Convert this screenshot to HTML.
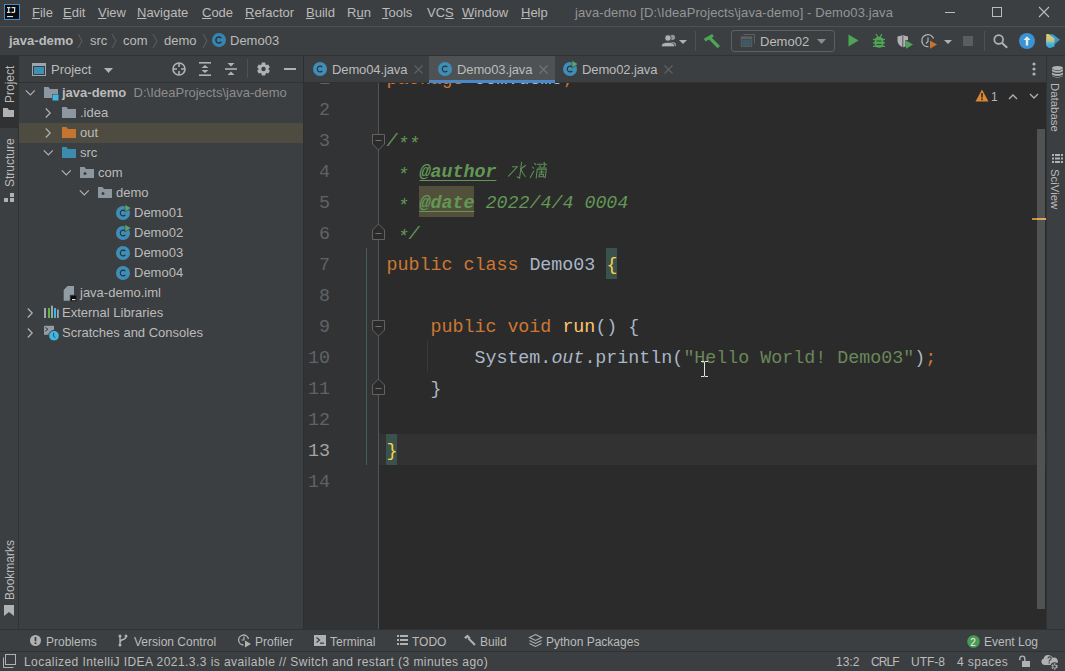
<!DOCTYPE html>
<html><head><meta charset="utf-8">
<style>
*{margin:0;padding:0;box-sizing:border-box}
html,body{width:1065px;height:671px;overflow:hidden;background:#3C3F41;font-family:"Liberation Sans",sans-serif;font-size:13px;color:#BBBBBB}
.a{position:absolute}
.t{position:absolute;white-space:pre;line-height:16px}
.u{text-decoration:underline;text-underline-offset:1px}
svg{position:absolute;overflow:visible}
.mono{font-family:"Liberation Mono",monospace}
</style></head><body>
<!-- ===== Title / menu bar ===== -->
<div class="a" style="left:0;top:0;width:1065px;height:26px;background:#3C3F41"></div>
<div class="a" style="left:0;top:26px;width:1065px;height:1px;background:#4F5152"></div>
<svg style="left:4px;top:4px" width="16" height="16" viewBox="0 0 16 16"><rect x="0.5" y="0.5" width="15" height="15" fill="#0C0C0C" stroke="#3D8FD9"/><g fill="#D8E2D8"><rect x="3" y="3" width="3.4" height="1.2"/><rect x="4.1" y="3" width="1.2" height="5.8"/><rect x="3" y="7.8" width="3.4" height="1.2"/><rect x="7.6" y="3" width="3.6" height="1.2"/><rect x="10" y="3" width="1.2" height="5"/><path d="M11.2 7.8Q11.2 9 9.6 9H7.5V7.8H9.6Q10 7.8 10 7.4Z"/><rect x="3" y="12" width="6" height="1.1"/></g></svg>
<div id="menu">
<span class="t" style="left:32px;top:5px"><span class="u">F</span>ile</span>
<span class="t" style="left:63px;top:5px"><span class="u">E</span>dit</span>
<span class="t" style="left:98px;top:5px"><span class="u">V</span>iew</span>
<span class="t" style="left:137px;top:5px"><span class="u">N</span>avigate</span>
<span class="t" style="left:202px;top:5px"><span class="u">C</span>ode</span>
<span class="t" style="left:245px;top:5px"><span class="u">R</span>efactor</span>
<span class="t" style="left:306px;top:5px"><span class="u">B</span>uild</span>
<span class="t" style="left:347px;top:5px">R<span class="u">u</span>n</span>
<span class="t" style="left:382px;top:5px"><span class="u">T</span>ools</span>
<span class="t" style="left:427px;top:5px">VC<span class="u">S</span></span>
<span class="t" style="left:462px;top:5px"><span class="u">W</span>indow</span>
<span class="t" style="left:521px;top:5px"><span class="u">H</span>elp</span>
</div>
<span class="t" style="left:575px;top:5px;color:#939597;letter-spacing:0.1px">java-demo [D:\IdeaProjects\java-demo] - Demo03.java</span>
<svg style="left:945px;top:12px" width="10" height="1"><rect width="10" height="1" fill="#BBBBBB"/></svg>
<svg style="left:992px;top:7px" width="10" height="10"><rect x="0.5" y="0.5" width="9" height="9" fill="none" stroke="#BBBBBB"/></svg>
<svg style="left:1039px;top:7px" width="10" height="10"><path d="M0 0L10 10M10 0L0 10" stroke="#BBBBBB" stroke-width="1.1"/></svg>

<!-- ===== Nav bar ===== -->
<div class="a" style="left:0;top:55px;width:1065px;height:1px;background:#323232"></div>
<span class="t" style="left:9px;top:33px;font-weight:bold">java-demo</span>
<svg style="left:77px;top:33px" width="6" height="16"><path d="M1 1L5 8L1 15" fill="none" stroke="#5E6060"/></svg>
<span class="t" style="left:90px;top:33px">src</span>
<svg style="left:111px;top:33px" width="6" height="16"><path d="M1 1L5 8L1 15" fill="none" stroke="#5E6060"/></svg>
<span class="t" style="left:123px;top:33px">com</span>
<svg style="left:152px;top:33px" width="6" height="16"><path d="M1 1L5 8L1 15" fill="none" stroke="#5E6060"/></svg>
<span class="t" style="left:164px;top:33px">demo</span>
<svg style="left:202px;top:33px" width="6" height="16"><path d="M1 1L5 8L1 15" fill="none" stroke="#5E6060"/></svg>
<svg style="left:212px;top:33px" width="14" height="14" viewBox="0 0 14 14"><circle cx="7" cy="7" r="7" fill="#3592C4" opacity=".85"/><path d="M9.3 5.2A3 3 0 1 0 9.3 8.8" fill="none" stroke="#27323A" stroke-width="1.5"/></svg>
<span class="t" style="left:230px;top:33px">Demo03</span>


<!-- ===== Left stripe ===== -->
<div class="a" style="left:0;top:56px;width:18px;height:573px;background:#3C3F41"></div>
<div class="a" style="left:0;top:56px;width:18px;height:72px;background:#2F3133"></div>
<div class="a" style="left:18px;top:56px;width:1px;height:573px;background:#323232"></div>
<span class="t" style="left:2px;top:103px;transform-origin:0 0;transform:rotate(-90deg);font-size:12px">Project</span>
<svg style="left:3px;top:108px" width="11" height="9"><path d="M0 0H4.5L6 2H11V9H0Z" fill="#AFB1B3"/></svg>
<span class="t" style="left:2px;top:187px;transform-origin:0 0;transform:rotate(-90deg);font-size:12px">Structure</span>
<svg style="left:4px;top:193px" width="10" height="9"><rect x="6" y="0" width="4" height="4" fill="#AFB1B3"/><rect x="0" y="5" width="4" height="4" fill="#AFB1B3"/><rect x="6" y="5" width="4" height="4" fill="#AFB1B3"/></svg>
<span class="t" style="left:2px;top:600px;transform-origin:0 0;transform:rotate(-90deg);font-size:12px">Bookmarks</span>
<svg style="left:4px;top:605px" width="10" height="11"><path d="M0 0H10V11L5 7L0 11Z" fill="#AFB1B3"/></svg>

<!-- ===== Project panel ===== -->
<div class="a" style="left:19px;top:56px;width:284px;height:573px;background:#3C3F41"></div>
<div class="a" style="left:19px;top:82px;width:284px;height:1px;background:#323232"></div>
<div class="a" style="left:303px;top:56px;width:1px;height:573px;background:#2E2F30"></div>
<svg style="left:32px;top:63px" width="14" height="13"><rect x="0.5" y="0.5" width="13" height="12" fill="none" stroke="#9AA7B0"/><rect x="0" y="0" width="14" height="3" fill="#9AA7B0"/><rect x="2" y="4" width="10" height="7" fill="#3D8FB6"/></svg>
<span class="t" style="left:51px;top:62px">Project</span>
<svg style="left:104px;top:68px" width="9" height="5"><path d="M0 0H9L4.5 5Z" fill="#AFB1B3"/></svg>
<svg style="left:172px;top:62px" width="14" height="14" viewBox="0 0 14 14"><circle cx="7" cy="7" r="6" fill="none" stroke="#AFB1B3" stroke-width="1.6"/><path d="M7 1V5M7 9V13M1 7H5M9 7H13" stroke="#AFB1B3" stroke-width="1.6"/></svg>
<svg style="left:199px;top:62px" width="12" height="14"><rect x="0" y="0" width="12" height="1.6" fill="#AFB1B3"/><rect x="0" y="12.4" width="12" height="1.6" fill="#AFB1B3"/><path d="M6 3L9.5 6H2.5Z M6 11L2.5 8H9.5Z" fill="#AFB1B3"/></svg>
<svg style="left:225px;top:63px" width="12" height="12"><rect x="0" y="5.2" width="12" height="1.6" fill="#AFB1B3"/><path d="M2.5 0H9.5L6 3.5Z M2.5 12H9.5L6 8.5Z" fill="#AFB1B3"/></svg>
<div class="a" style="left:247px;top:59px;width:1px;height:19px;background:#515151"></div>
<svg style="left:257px;top:62px" width="13" height="14" viewBox="0 0 13 14"><path d="M4.35 2.60L4.90 0.60L8.10 0.60L8.65 2.60L9.24 2.94L11.25 2.42L12.84 5.18L11.39 6.66L11.39 7.34L12.84 8.82L11.25 11.58L9.24 11.06L8.65 11.40L8.10 13.40L4.90 13.40L4.35 11.40L3.76 11.06L1.75 11.58L0.16 8.82L1.61 7.34L1.61 6.66L0.16 5.18L1.75 2.42L3.76 2.94Z" fill="#AFB1B3"/><circle cx="6.5" cy="7" r="2.2" fill="#3C3F41"/></svg>
<div class="a" style="left:284px;top:68px;width:12px;height:2px;background:#AFB1B3"></div>

<!-- tree -->
<div class="a" style="left:19px;top:123px;width:284px;height:20px;background:#4E4C40"></div>


<svg width="0" height="0" style="position:absolute">
<defs>
<symbol id="chd" viewBox="0 0 16 20"><path d="M3.8 7.3L8.3 11.8L12.8 7.3" fill="none" stroke="#AFB1B3" stroke-width="1.2"/></symbol>
<symbol id="chr" viewBox="0 0 16 20"><path d="M5.8 5.5L10.2 10L5.8 14.5" fill="none" stroke="#AFB1B3" stroke-width="1.2"/></symbol>
<symbol id="fold" viewBox="0 0 16 20"><path d="M1 4H5.5L7 6H15V15H1Z" fill="#9AA7B0" fill-opacity=".85"/></symbol>
<symbol id="foldO" viewBox="0 0 16 20"><path d="M1 4H5.5L7 6H15V15H1Z" fill="#C57431"/></symbol>
<symbol id="foldS" viewBox="0 0 16 20"><path d="M1 4H5.5L7 6H15V15H1Z" fill="#3D8BAF"/></symbol>
<symbol id="foldP" viewBox="0 0 16 20"><path d="M1 4H5.5L7 6H15V15H1Z" fill="#9AA7B0" fill-opacity=".85"/><circle cx="6" cy="10.5" r="1.5" fill="#3C3F41"/></symbol>
<symbol id="foldM" viewBox="0 0 16 20"><path d="M1 4H5.5L7 6H15V11H9V15H1Z" fill="#9AA7B0" fill-opacity=".85"/><rect x="9.5" y="11.5" width="6" height="6" fill="#40B6E0"/></symbol>
<symbol id="cls" viewBox="0 0 16 20"><circle cx="8" cy="10" r="7" fill="#3E8EB8"/><path d="M10.3 8A2.9 2.9 0 1 0 10.3 12" fill="none" stroke="#26323A" stroke-width="1.15"/></symbol>
<symbol id="clsR" viewBox="0 0 16 20"><circle cx="8" cy="10" r="7" fill="#3E8EB8"/><path d="M10.3 8A2.9 2.9 0 1 0 10.3 12" fill="none" stroke="#26323A" stroke-width="1.15"/><path d="M10 1.5L16 5L10 9Z" fill="#59A869" stroke="#3C3F41" stroke-width=".6"/></symbol>
<symbol id="iml" viewBox="0 0 16 20"><path d="M2.7 7L6.5 3H13V17.8H2.7Z" fill="#9AA7B0" fill-opacity=".9"/><rect x="9.2" y="12.2" width="6.6" height="6.4" fill="#0E0E0E" stroke="#3C3F41" stroke-width=".8"/><rect x="11" y="16" width="3.5" height="1.2" fill="#E0E6E0"/></symbol>
<symbol id="lib" viewBox="0 0 16 20"><rect x="1" y="5" width="2" height="10" fill="#9AA7B0"/><rect x="5" y="5" width="2" height="10" fill="#62B543"/><rect x="8" y="2.7" width="2" height="12.3" fill="#9AA7B0"/><rect x="11" y="5" width="2" height="10" fill="#40B6E0"/><rect x="14" y="6.5" width="1.8" height="8.5" fill="#9AA7B0"/></symbol>
<symbol id="scr" viewBox="0 0 16 20"><path d="M1 2.8H11V11.8H1Z" fill="#9AA7B0" fill-opacity=".9"/><path d="M2.3 4.5L5 6.3L2.3 8.1" fill="none" stroke="#3C3F41" stroke-width="1"/><circle cx="11" cy="12.7" r="5.3" fill="#40B6E0" stroke="#3C3F41" stroke-width="1"/><path d="M10.6 9.8V13.3L12.4 14.6" fill="none" stroke="#2B5060" stroke-width="1"/></symbol>
</defs></svg>
<svg style="left:22px;top:83px" width="16" height="20"><use href="#chd"/></svg>
<svg style="left:43px;top:83px" width="16" height="20"><use href="#foldM"/></svg>
<span class="t" style="left:62px;top:85px"><b>java-demo</b>  <span style="color:#8C8C8C">D:\IdeaProjects\java-demo</span></span>
<svg style="left:40px;top:103px" width="16" height="20"><use href="#chr"/></svg>
<svg style="left:61px;top:103px" width="16" height="20"><use href="#fold"/></svg>
<span class="t" style="left:80px;top:105px">.idea</span>
<svg style="left:40px;top:123px" width="16" height="20"><use href="#chr"/></svg>
<svg style="left:61px;top:123px" width="16" height="20"><use href="#foldO"/></svg>
<span class="t" style="left:80px;top:125px">out</span>
<svg style="left:40px;top:143px" width="16" height="20"><use href="#chd"/></svg>
<svg style="left:61px;top:143px" width="16" height="20"><use href="#foldS"/></svg>
<span class="t" style="left:80px;top:145px">src</span>
<svg style="left:58px;top:163px" width="16" height="20"><use href="#chd"/></svg>
<svg style="left:79px;top:163px" width="16" height="20"><use href="#foldP"/></svg>
<span class="t" style="left:98px;top:165px">com</span>
<svg style="left:76px;top:183px" width="16" height="20"><use href="#chd"/></svg>
<svg style="left:97px;top:183px" width="16" height="20"><use href="#foldP"/></svg>
<span class="t" style="left:116px;top:185px">demo</span>
<svg style="left:115px;top:203px" width="16" height="20"><use href="#clsR"/></svg>
<span class="t" style="left:134px;top:205px">Demo01</span>
<svg style="left:115px;top:223px" width="16" height="20"><use href="#clsR"/></svg>
<span class="t" style="left:134px;top:225px">Demo02</span>
<svg style="left:115px;top:243px" width="16" height="20"><use href="#cls"/></svg>
<span class="t" style="left:134px;top:245px">Demo03</span>
<svg style="left:115px;top:263px" width="16" height="20"><use href="#cls"/></svg>
<span class="t" style="left:134px;top:265px">Demo04</span>
<svg style="left:61px;top:283px" width="16" height="20"><use href="#iml"/></svg>
<span class="t" style="left:80px;top:285px">java-demo.iml</span>
<svg style="left:22px;top:303px" width="16" height="20"><use href="#chr"/></svg>
<svg style="left:43px;top:303px" width="16" height="20"><use href="#lib"/></svg>
<span class="t" style="left:62px;top:305px">External Libraries</span>
<svg style="left:22px;top:323px" width="16" height="20"><use href="#chr"/></svg>
<svg style="left:43px;top:323px" width="16" height="20"><use href="#scr"/></svg>
<span class="t" style="left:62px;top:325px">Scratches and Consoles</span>


<!-- ===== Editor ===== -->
<div class="a" style="left:304px;top:56px;width:742px;height:26px;background:#3C3F41"></div>
<div class="a" style="left:429px;top:56px;width:126px;height:26px;background:#4E5254"></div>
<div class="a" style="left:304px;top:82px;width:742px;height:1px;background:#323232"></div>
<div class="a" style="left:304px;top:83px;width:742px;height:546px;background:#2B2B2B"></div>
<div class="a" style="left:304px;top:83px;width:74px;height:546px;background:#313335"></div>
<div class="a" style="left:379px;top:434px;width:667px;height:31px;background:#323232"></div>
<div class="a" style="left:419px;top:186px;width:55px;height:31px;background:#52503A"></div>
<div class="a" style="left:606px;top:248px;width:11px;height:31px;background:#3B514D"></div>
<div class="a" style="left:386px;top:434px;width:11px;height:31px;background:#3B514D"></div>
<div class="a" style="left:378px;top:83px;width:1px;height:546px;background:#555555"></div>
<div class="a" style="left:366px;top:248px;width:1px;height:217px;background:#4A5C5E"></div>
<div class="a" style="left:427px;top:341px;width:1px;height:31px;background:#393B3B"></div>

<svg style="left:312px;top:59px" width="16" height="20"><use href="#cls"/></svg>
<span class="t" style="left:332px;top:62px;letter-spacing:-0.12px">Demo04.java</span>
<svg style="left:414px;top:65px" width="9" height="9"><path d="M0.5 0.5L8.5 8.5M8.5 0.5L0.5 8.5" stroke="#5F6163" stroke-width="1.1"/></svg>
<svg style="left:437px;top:59px" width="16" height="20"><use href="#cls"/></svg>
<span class="t" style="left:457px;top:62px;letter-spacing:-0.12px">Demo03.java</span>
<svg style="left:539px;top:65px" width="9" height="9"><path d="M0.5 0.5L8.5 8.5M8.5 0.5L0.5 8.5" stroke="#727476" stroke-width="1.1"/></svg>
<svg style="left:562px;top:59px" width="16" height="20"><use href="#clsR"/></svg>
<span class="t" style="left:582px;top:62px;letter-spacing:-0.12px">Demo02.java</span>
<svg style="left:664px;top:65px" width="9" height="9"><path d="M0.5 0.5L8.5 8.5M8.5 0.5L0.5 8.5" stroke="#5F6163" stroke-width="1.1"/></svg>
<div class="a" style="left:429px;top:80px;width:126px;height:3px;background:#4A88C7"></div>
<svg style="left:1032px;top:62px" width="4" height="14"><circle cx="2" cy="2" r="1.6" fill="#AFB1B3"/><circle cx="2" cy="7" r="1.6" fill="#AFB1B3"/><circle cx="2" cy="12" r="1.6" fill="#AFB1B3"/></svg>
<div class="a" style="left:304px;top:83px;width:742px;height:546px;overflow:hidden"><div class="a" id="code" style="left:0;top:2px;width:742px;height:546px">
<div class="t mono" style="left:0;width:26px;text-align:right;top:-21px;font-size:18.333px;line-height:31px;color:#606366">1</div>
<div class="t mono" style="left:82.4px;top:-21px;font-size:18.333px;line-height:31px"><span style="color:#CC7832;">package</span><span style="color:#A9B7C6;"> com.demo</span><span style="color:#CC7832;">;</span></div>
<div class="t mono" style="left:0;width:26px;text-align:right;top:10px;font-size:18.333px;line-height:31px;color:#606366">2</div>
<div class="t mono" style="left:0;width:26px;text-align:right;top:41px;font-size:18.333px;line-height:31px;color:#606366">3</div>
<div class="t mono" style="left:82.4px;top:41px;font-size:18.333px;line-height:31px"><span style="color:#629755;font-style:italic">/<span style="position:relative;top:3px">*</span><span style="position:relative;top:3px">*</span></span></div>
<div class="t mono" style="left:0;width:26px;text-align:right;top:72px;font-size:18.333px;line-height:31px;color:#606366">4</div>
<div class="t mono" style="left:82.4px;top:72px;font-size:18.333px;line-height:31px"><span style="color:#629755;font-style:italic"> <span style="position:relative;top:3px">*</span> </span><span style="color:#629755;font-style:italic;font-weight:bold;text-decoration:underline;text-underline-offset:3px;text-decoration-thickness:1px">@author</span><span style="color:#629755;font-style:italic"> </span></div>
<div class="t mono" style="left:0;width:26px;text-align:right;top:103px;font-size:18.333px;line-height:31px;color:#606366">5</div>
<div class="t mono" style="left:82.4px;top:103px;font-size:18.333px;line-height:31px"><span style="color:#629755;font-style:italic"> <span style="position:relative;top:3px">*</span> </span><span style="color:#629755;font-style:italic;font-weight:bold;text-decoration:underline;text-underline-offset:3px;text-decoration-thickness:1px">@date</span><span style="color:#629755;font-style:italic"> 2022/4/4 0004</span></div>
<div class="t mono" style="left:0;width:26px;text-align:right;top:134px;font-size:18.333px;line-height:31px;color:#606366">6</div>
<div class="t mono" style="left:82.4px;top:134px;font-size:18.333px;line-height:31px"><span style="color:#629755;font-style:italic"> <span style="position:relative;top:3px">*</span>/</span></div>
<div class="t mono" style="left:0;width:26px;text-align:right;top:165px;font-size:18.333px;line-height:31px;color:#606366">7</div>
<div class="t mono" style="left:82.4px;top:165px;font-size:18.333px;line-height:31px"><span style="color:#CC7832;">public class </span><span style="color:#A9B7C6;">Demo03 </span><span style="color:#F5D446;">{</span></div>
<div class="t mono" style="left:0;width:26px;text-align:right;top:196px;font-size:18.333px;line-height:31px;color:#606366">8</div>
<div class="t mono" style="left:0;width:26px;text-align:right;top:227px;font-size:18.333px;line-height:31px;color:#606366">9</div>
<div class="t mono" style="left:82.4px;top:227px;font-size:18.333px;line-height:31px"><span style="color:#CC7832;">    public void </span><span style="color:#FFC66D;">run</span><span style="color:#A9B7C6;">() {</span></div>
<div class="t mono" style="left:0;width:26px;text-align:right;top:258px;font-size:18.333px;line-height:31px;color:#606366">10</div>
<div class="t mono" style="left:82.4px;top:258px;font-size:18.333px;line-height:31px"><span style="color:#A9B7C6;">        System.</span><span style="color:#A9B7C6;font-style:italic">out</span><span style="color:#A9B7C6;">.println(</span><span style="color:#6A8759;">"Hello World! Demo03"</span><span style="color:#A9B7C6;">)</span><span style="color:#CC7832;">;</span></div>
<div class="t mono" style="left:0;width:26px;text-align:right;top:289px;font-size:18.333px;line-height:31px;color:#606366">11</div>
<div class="t mono" style="left:82.4px;top:289px;font-size:18.333px;line-height:31px"><span style="color:#A9B7C6;">    }</span></div>
<div class="t mono" style="left:0;width:26px;text-align:right;top:320px;font-size:18.333px;line-height:31px;color:#606366">12</div>
<div class="t mono" style="left:0;width:26px;text-align:right;top:351px;font-size:18.333px;line-height:31px;color:#A4A3A3">13</div>
<div class="t mono" style="left:82.4px;top:351px;font-size:18.333px;line-height:31px"><span style="color:#F5D446;">}</span></div>
<div class="t mono" style="left:0;width:26px;text-align:right;top:382px;font-size:18.333px;line-height:31px;color:#606366">14</div>
</div></div>
<svg style="left:372px;top:134px" width="13" height="17"><path d="M0.5 0.5H12.5V10L6.5 16L0.5 10Z" fill="#2B2B2B" stroke="#626262"/><path d="M3.5 6.5H9.5" stroke="#707070"/></svg>
<svg style="left:372px;top:320px" width="13" height="17"><path d="M0.5 0.5H12.5V10L6.5 16L0.5 10Z" fill="#2B2B2B" stroke="#626262"/><path d="M3.5 6.5H9.5" stroke="#707070"/></svg>
<svg style="left:372px;top:223px" width="13" height="17"><path d="M0.5 16.5H12.5V7L6.5 1L0.5 7Z" fill="#2B2B2B" stroke="#626262"/><path d="M3.5 10.5H9.5" stroke="#707070"/></svg>
<svg style="left:372px;top:378px" width="13" height="17"><path d="M0.5 16.5H12.5V7L6.5 1L0.5 7Z" fill="#2B2B2B" stroke="#626262"/><path d="M3.5 10.5H9.5" stroke="#707070"/></svg>
<svg style="left:700px;top:360px" width="9" height="18"><path d="M1 1.5H4M5 1.5H8M4.5 1.5V16.5M1 16.5H4M5 16.5H8" stroke="#DDE3DD" stroke-width="1"/></svg>
<svg style="left:975px;top:89px" width="14" height="13"><path d="M7 0.5L13.5 12.5H0.5Z" fill="#D98733"/><rect x="6.2" y="4" width="1.6" height="4.5" fill="#2B2B2B"/><rect x="6.2" y="9.5" width="1.6" height="1.6" fill="#2B2B2B"/></svg>
<span class="t" style="left:991px;top:89px;color:#A9B7C6;font-size:12px">1</span>
<svg style="left:1008px;top:93px" width="10" height="7"><path d="M1 6L5 2L9 6" fill="none" stroke="#AFB1B3" stroke-width="1.3"/></svg>
<svg style="left:1029px;top:93px" width="10" height="7"><path d="M1 1L5 5L9 1" fill="none" stroke="#AFB1B3" stroke-width="1.3"/></svg>
<div class="a" style="left:1037px;top:129px;width:8px;height:480px;background:#505254"></div>
<div class="a" style="left:1032px;top:218px;width:5px;height:2px;background:#D08A36"></div>
<div class="a" style="left:1037px;top:218px;width:9px;height:2px;background:#D9A860"></div>


<svg style="left:508px;top:162px" width="40" height="18" viewBox="0 0 40 18"><g fill="none" stroke="#5C9156" stroke-width="1.05" stroke-linecap="round">
<path d="M13.5 0.3Q12.8 8 11.6 16.2L9.2 14.8"/><path d="M4.3 4.8H9.3L0.6 14.2"/><path d="M17.5 3.5L12.9 6.8"/><path d="M12.9 6.8Q14.5 11.5 17.2 14.5"/>
<path d="M26.5 1.3L27.8 2.6"/><path d="M24.5 5L25.8 6.3"/><path d="M22.3 15.6L25.8 9"/>
<path d="M36 0.2L36.6 1.6"/><path d="M29.3 2.2H38.6"/><path d="M31.8 3.5L32.6 5"/><path d="M36.8 3.4L35.8 5"/><path d="M30 6H38"/>
<path d="M29.2 7.2L28.2 16.2"/><path d="M29.2 7.2H38.3L37.2 15.5L35.8 14.8"/><path d="M31 10H36.2"/><path d="M33.8 8L33.3 12"/><path d="M31.4 12.2H35.6L35.1 14.8H30.9Z"/>
</g></svg>

<!-- ===== Right stripe ===== -->
<div class="a" style="left:1046px;top:56px;width:1px;height:573px;background:#323232"></div>
<svg style="left:1052px;top:66px" width="11" height="12" viewBox="0 0 11 12"><ellipse cx="5.5" cy="2" rx="5.5" ry="2" fill="#AFB1B3"/><path d="M0 3.2Q5.5 6.5 11 3.2V5.2Q5.5 8.5 0 5.2Z M0 6.4Q5.5 9.7 11 6.4V8.4Q5.5 11.7 0 8.4Z M0 9.6Q5.5 12.9 11 9.6V10Q5.5 13.5 0 10Z" fill="#AFB1B3"/></svg>
<span class="t" style="left:1063px;top:83px;transform-origin:0 0;transform:rotate(90deg);font-size:11.4px">Database</span>
<svg style="left:1052px;top:154px" width="11" height="9"><rect x="0" y="0" width="2" height="2" fill="#AFB1B3"/><rect x="0" y="3.5" width="2" height="2" fill="#AFB1B3"/><rect x="0" y="7" width="2" height="2" fill="#AFB1B3"/><rect x="3" y="0" width="5" height="2" fill="#AFB1B3"/><rect x="3" y="3.5" width="5" height="2" fill="#AFB1B3"/><rect x="3" y="7" width="5" height="2" fill="#AFB1B3"/><rect x="9" y="0" width="2" height="2" fill="#AFB1B3"/><rect x="9" y="3.5" width="2" height="2" fill="#AFB1B3"/><rect x="9" y="7" width="2" height="2" fill="#AFB1B3"/></svg>
<span class="t" style="left:1063px;top:169px;transform-origin:0 0;transform:rotate(90deg);font-size:11.4px">SciView</span>

<!-- ===== Bottom tool stripe ===== -->
<div class="a" style="left:0;top:629px;width:1065px;height:1px;background:#323232"></div>
<div class="a" style="left:0;top:651px;width:1065px;height:1px;background:#323232"></div>
<div style="font-size:12px">
<svg style="left:30px;top:635px" width="11" height="11"><circle cx="5.5" cy="5.5" r="5.5" fill="#AFB1B3"/><rect x="4.6" y="2" width="1.8" height="4.2" fill="#3C3F41"/><rect x="4.6" y="7.3" width="1.8" height="1.8" fill="#3C3F41"/></svg>
<span class="t" style="left:46px;top:634px">Problems</span>
<svg style="left:118px;top:634px" width="10" height="13"><path d="M2 1.5V11.5M2 9Q2 6 5 5.5Q8 5 8 2" fill="none" stroke="#AFB1B3" stroke-width="1.4"/><circle cx="2" cy="2" r="1.5" fill="#AFB1B3"/><circle cx="8" cy="2" r="1.5" fill="#AFB1B3"/><circle cx="2" cy="11" r="1.5" fill="#AFB1B3"/></svg>
<span class="t" style="left:134px;top:634px">Version Control</span>
<svg style="left:238px;top:634px" width="14" height="14"><path d="M10.5 5A5 5 0 1 0 5.5 11" fill="none" stroke="#AFB1B3" stroke-width="1.3"/><path d="M6 2.5V6H3.5" fill="none" stroke="#AFB1B3" stroke-width="1.2"/><path d="M7 6.5L13 10L7 13.5Z" fill="#AFB1B3"/></svg>
<span class="t" style="left:255px;top:634px">Profiler</span>
<svg style="left:314px;top:635px" width="12" height="11"><rect x="0" y="0" width="12" height="11" fill="#AFB1B3"/><path d="M2.5 2.5L5.5 5L2.5 7.5" fill="none" stroke="#3C3F41" stroke-width="1.3"/><rect x="6" y="7.5" width="4" height="1.3" fill="#3C3F41"/></svg>
<span class="t" style="left:330px;top:634px">Terminal</span>
<svg style="left:397px;top:635px" width="11" height="10"><rect x="0" y="0" width="2" height="2" fill="#AFB1B3"/><rect x="0" y="4" width="2" height="2" fill="#AFB1B3"/><rect x="0" y="8" width="2" height="2" fill="#AFB1B3"/><rect x="3" y="0" width="8" height="2" fill="#AFB1B3"/><rect x="3" y="4" width="8" height="2" fill="#AFB1B3"/><rect x="3" y="8" width="8" height="2" fill="#AFB1B3"/></svg>
<span class="t" style="left:412px;top:634px">TODO</span>
<svg style="left:463px;top:634px" width="13" height="13"><path d="M1 3.5L4.5 0.5L7.5 3.5L6 5L4.5 3.5L3 5Z" fill="#AFB1B3"/><path d="M5.3 4.2L12 11" stroke="#AFB1B3" stroke-width="2"/></svg>
<span class="t" style="left:480px;top:634px">Build</span>
<svg style="left:529px;top:634px" width="13" height="13"><path d="M6.5 0.5L12.5 3.5L6.5 6.5L0.5 3.5Z" fill="none" stroke="#AFB1B3" stroke-width="1.1"/><path d="M0.5 6.5L6.5 9.5L12.5 6.5M0.5 9.5L6.5 12.5L12.5 9.5" fill="none" stroke="#AFB1B3" stroke-width="1.1"/></svg>
<span class="t" style="left:546px;top:634px">Python Packages</span>
<svg style="left:967px;top:635px" width="13" height="13"><circle cx="6.5" cy="6.5" r="6.3" fill="#499C54"/><text x="3.3" y="10.5" font-family="Liberation Sans" font-size="10" fill="#E8F0E8">2</text></svg>
<span class="t" style="left:984px;top:634px">Event Log</span>

<!-- ===== Status bar ===== -->
<svg style="left:3px;top:654px" width="13" height="14"><path d="M0.5 3.5V13.5H10.5" fill="none" stroke="#AFB1B3"/><rect x="2.5" y="0.5" width="10" height="10" fill="none" stroke="#AFB1B3"/></svg>
<span class="t" style="left:24px;top:654px;letter-spacing:0.44px">Localized IntelliJ IDEA 2021.3.3 is available // Switch and restart (3 minutes ago)</span>
<span class="t" style="left:836px;top:654px">13:2</span>
<span class="t" style="left:871px;top:654px;letter-spacing:-0.9px">CRLF</span>
<span class="t" style="left:911px;top:654px">UTF-8</span>
<span class="t" style="left:957px;top:654px;letter-spacing:0.4px">4 spaces</span>
<svg style="left:1018px;top:655px" width="13" height="13"><path d="M1.8 5.2V3.6A2.5 2.5 0 0 1 6.8 3.6V6" fill="none" stroke="#AFB1B3" stroke-width="1.4"/><rect x="4" y="6" width="8" height="6" fill="#AFB1B3"/></svg>
<svg style="left:1041px;top:654px" width="18" height="16" viewBox="0 0 18 16"><path d="M3.5 11A3.2 3.2 0 0 1 2.5 4.8A5 5 0 0 1 11.8 3.8A3.5 3.5 0 0 1 14.5 10.5L13 11Z" fill="#AFB1B3"/><path d="M7 4.5A1.6 1.6 0 1 1 9 6Q8.2 6.5 8.2 7.5" fill="none" stroke="#3C3F41" stroke-width="1.1"/><rect x="7.6" y="8.3" width="1.2" height="1.2" fill="#3C3F41"/><circle cx="13.5" cy="12.5" r="4.2" fill="#3C3F41"/><circle cx="13.5" cy="12.5" r="2.4" fill="none" stroke="#AFB1B3" stroke-width="1.5" stroke-dasharray="1.4 1"/><circle cx="13.5" cy="12.5" r="1.6" fill="none" stroke="#AFB1B3" stroke-width=".8"/></svg>
</div>


<!-- ===== Toolbar ===== -->
<svg style="left:661px;top:34px" width="16" height="14" viewBox="0 0 16 14"><circle cx="11.5" cy="3.3" r="2.6" fill="#AFB1B3" fill-opacity=".75"/><path d="M8.5 8.5Q11.5 6.5 15 9.5V12H10Z" fill="#AFB1B3" fill-opacity=".75"/><circle cx="7" cy="4" r="3.2" fill="#AFB1B3" stroke="#3C3F41" stroke-width=".8"/><path d="M0.5 12.8V11Q1.5 8.5 7 8.3Q12.5 8.5 13.5 11V12.8Z" fill="#AFB1B3" stroke="#3C3F41" stroke-width=".8"/></svg>
<svg style="left:679px;top:40px" width="8" height="4"><path d="M0 0H8L4 4Z" fill="#AFB1B3"/></svg>
<div class="a" style="left:695px;top:31px;width:1px;height:20px;background:#515151"></div>
<svg style="left:703px;top:33px" width="17" height="16" viewBox="0 0 17 16"><path d="M0.8 5.8L9.2 0.9L10.8 3.4L2.5 8.4Z" fill="#4FA556"/><path d="M6 4.2L15.8 14.2" stroke="#4FA556" stroke-width="3.2"/></svg>
<div class="a" style="left:731px;top:30px;width:104px;height:22px;border:1px solid #5E6060;border-radius:3px"></div>
<svg style="left:740px;top:34px" width="16" height="14" viewBox="0 0 16 14"><path d="M3.5 0.5H14.5V9.5" fill="none" stroke="#5E6060"/><rect x="1.3" y="3.1" width="10.4" height="9.3" fill="#3C3F41" stroke="#5E6060"/><rect x="1" y="2.6" width="11" height="2.4" fill="#5E6060"/><rect x="2.3" y="5.5" width="8.4" height="6.4" fill="#3D5A66"/></svg>
<span class="t" style="left:760px;top:34px">Demo02</span>
<svg style="left:817px;top:39px" width="9" height="5"><path d="M0 0H9L4.5 5Z" fill="#8A8C8E"/></svg>
<svg style="left:848px;top:34px" width="11" height="13"><path d="M0.5 0.5L10.5 6.5L0.5 12.5Z" fill="#4FA556"/></svg>
<svg style="left:872px;top:33px" width="14" height="15" viewBox="0 0 14 15"><path d="M4 1.2L5.8 3.8M10 1.2L8.2 3.8" stroke="#4FA556" stroke-width="1.2"/><path d="M7 3.6Q11.6 3.8 11.6 9.5Q11.6 14.6 7 14.8Q2.4 14.6 2.4 9.5Q2.4 3.8 7 3.6Z" fill="#4FA556"/><path d="M1 6.3H13M1 9.8H13M1 13.3H13" stroke="#4FA556" stroke-width="1.3"/><path d="M4.5 8H9.5M4.5 11.5H9.5" stroke="#3C3F41" stroke-width="1.2"/></svg>
<svg style="left:897px;top:35px" width="17" height="14" viewBox="0 0 17 14"><path d="M0.5 1.5L6 0.2L11 1.5V5H8.5V11.5L6 12.3Q1 10.5 0.5 6Z" fill="#AFB1B3"/><path d="M5.8 1V12" stroke="#3C3F41" stroke-width=".8"/><path d="M9 5.5L16 9.6L9 13.7Z" fill="#4FA556"/></svg>
<svg style="left:921px;top:34px" width="17" height="15" viewBox="0 0 17 15"><path d="M12.5 4.5A6 6 0 1 0 7.5 12.6" fill="none" stroke="#AFB1B3" stroke-width="1.4"/><path d="M7 3.5V7.5L5 9.5" fill="none" stroke="#AFB1B3" stroke-width="1.2"/><path d="M9 6.5L16 10.6L9 14.7Z" fill="#C9742E"/></svg>
<svg style="left:944px;top:40px" width="8" height="4"><path d="M0 0H8L4 4Z" fill="#AFB1B3"/></svg>
<div class="a" style="left:963px;top:36px;width:10px;height:10px;background:#5A5C5E"></div>
<div class="a" style="left:984px;top:31px;width:1px;height:20px;background:#515151"></div>
<svg style="left:993px;top:34px" width="16" height="15" viewBox="0 0 16 15"><circle cx="5.7" cy="5.5" r="4.4" fill="none" stroke="#AFB1B3" stroke-width="1.7"/><path d="M8.8 8.7L14.2 13.8" stroke="#AFB1B3" stroke-width="2"/></svg>
<svg style="left:1019px;top:33px" width="16" height="16" viewBox="0 0 16 16"><circle cx="8" cy="8" r="8" fill="#3B93D6"/><path d="M8 3.2L11.5 7H9.2V12.5H6.8V7H4.5Z" fill="#E3ECE3"/></svg>
<svg style="left:1045px;top:33px" width="16" height="16" viewBox="0 0 16 16"><defs><linearGradient id="lg1" x1="0" y1="0" x2="0" y2="1"><stop offset="0" stop-color="#EBD43A"/><stop offset=".3" stop-color="#DCC47A"/><stop offset=".5" stop-color="#A9C89A"/><stop offset=".7" stop-color="#52B0D0"/><stop offset="1" stop-color="#2FA8E0"/></linearGradient><linearGradient id="lg2" x1="0" y1="0" x2="0" y2="1"><stop offset="0" stop-color="#3FA6D8"/><stop offset="1" stop-color="#3282C6"/></linearGradient></defs><path d="M1.5 1L8 1.5L15 6.8L5 15Q1.5 14 1 11Z" fill="url(#lg2)"/><path d="M1.5 1L3 1L9.5 5.5V13.5L5 15Q1.5 14 1 11Z" fill="url(#lg1)"/></svg>

</body></html>
